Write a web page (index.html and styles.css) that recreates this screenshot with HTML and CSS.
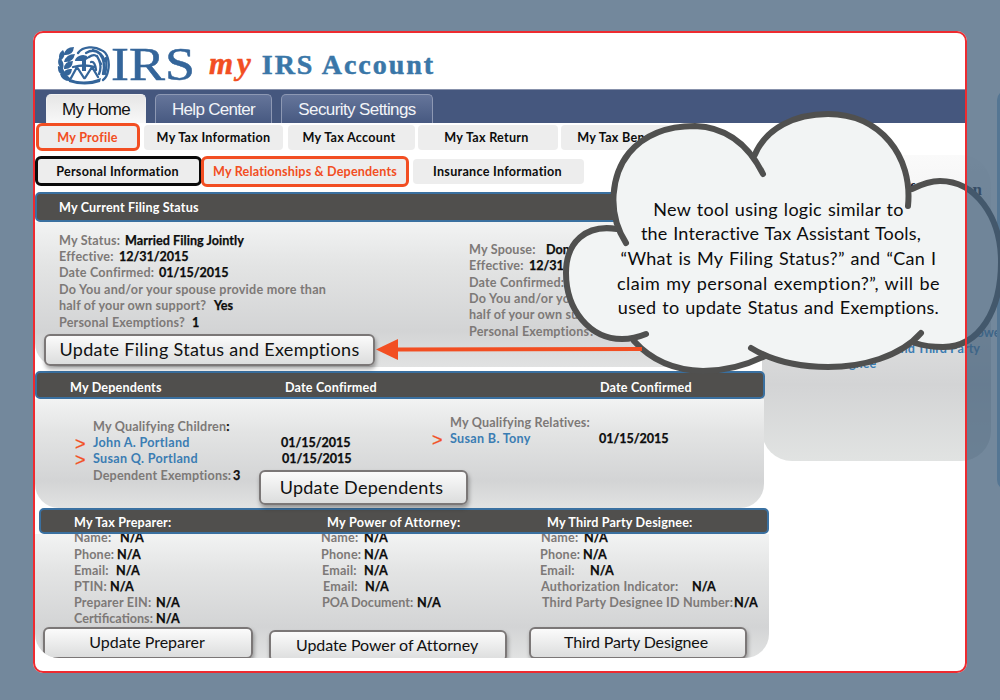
FILE: index.html
```html
<!DOCTYPE html>
<html lang="en">
<head>
<meta charset="utf-8">
<title>my IRS Account</title>
<link rel="stylesheet" href="styles.css">
</head>
<body>
<aside class="side">
  <h2 class="side-title">Tax Information</h2>
  <p class="side-link one">Power</p>
  <p class="side-link two">Attorney and Third Party</p>
  <p class="side-link three">Designee</p>
</aside>
<div class="edge"></div>
<main class="page">
  <header class="brand">
    <svg class="logo" viewBox="0 0 138 40" width="138" height="40">
      <g fill="#34659a">
        <path d="M17 1q-9 0-10 8q9 1 10-8zM6 4q-6 4-3 11q7-5 3-11zM18 8q-9 0-11 8q9 1 11-8zM2 12q-3 7 4 11q2-8-4-11zM16 15q-9 0-9 8q8 1 9-8zM1 20q-1 8 7 10q0-9-7-10zM15 23q-8-1-9 6q8 3 9-6zM3 28q2 8 12 7q-4-8-12-7z"/>
        <path d="M22 10q6-3 10 2l-3 2v11h-4V15h-7q0-3 4-5z"/>
        <path d="M11 32q15 7 33 0l-1 4q-15 5-31 0z"/>
      </g>
      <g fill="none" stroke="#34659a" stroke-width="2.300" stroke-linecap="round">
        <path d="M16 21q11-3 22 0M20 21l-6 11M20 21l7 11M35 21l-7 11M35 21l6 10"/>
        <path d="M21 7C26 0 38 0 44 4C51 6 53 17 51 25Q50 31 46 34"/>
        <path d="M29 7Q37 2 43 8Q49 16 46 28M32 11Q39 6 42 14Q45 21 42 28M34 16q4-1 5 8M36 4q9 2 12 11M49 12q1 9-1 16M40 10l4 8"/>
      </g>
      <text x="54" y="34" class="logo-text" textLength="84" lengthAdjust="spacingAndGlyphs">IRS</text>
    </svg>
    <h1 class="title"><em>my</em> IRS Account</h1>
  </header>
  <nav class="tabs">
    <a class="tab on">My Home</a><a class="tab help">Help Center</a><a class="tab sec">Security Settings</a>
  </nav>
  <nav class="row r1">
    <a class="chip orange c1">My Profile</a><a class="chip c2">My Tax Information</a><a class="chip c3">My Tax Account</a><a class="chip c4">My Tax Return</a><a class="chip c5">My Tax Benefits</a>
  </nav>
  <nav class="row r2">
    <a class="chip black d1">Personal Information</a><a class="chip orange d2">My Relationships &amp; Dependents</a><a class="chip d3">Insurance Information</a>
  </nav>

  <section class="sect s1">
    <div class="bar"><span>My Current Filing Status</span></div>
    <div class="panel">
      <div class="col f1">
        <p><span class="k w66">My Status:</span><b>Married Filing Jointly</b></p>
        <p><span class="k w60">Effective:</span><b class="date">12/31/2015</b></p>
        <p><span class="k w100">Date Confirmed:</span><b class="date">01/15/2015</b></p>
        <p class="gap"><span class="k wide">Do You and/or your spouse provide more than</span></p>
        <p><span class="k w155">half of your own support?</span><b>Yes</b></p>
        <p class="gap"><span class="k w133">Personal Exemptions?</span><b>1</b></p>
      </div>
      <div class="col f2">
        <p><span class="k w77">My Spouse:</span><b>Donna Portland</b></p>
        <p><span class="k w60">Effective:</span><b class="date">12/31/2015</b></p>
        <p class="gap"><span class="k w100">Date Confirmed:</span></p>
        <p><span class="k wide">Do You and/or your spouse</span></p>
        <p><span class="k w155">half of your own support?</span></p>
        <p class="gap"><span class="k w133">Personal Exemptions?</span></p>
      </div>
      <button class="btn b1">Update Filing Status and Exemptions</button>
    </div>
  </section>

  <section class="sect s2">
    <div class="bar"><span>My Dependents</span><span>Date Confirmed</span><span>Date Confirmed</span></div>
    <div class="panel">
      <div class="col g1">
        <p><span class="k">My Qualifying Children</span><b>:</b></p>
        <p class="link"><i>&gt;</i>John A. Portland</p>
        <p class="link"><i>&gt;</i>Susan Q. Portland</p>
        <p><span class="k w140">Dependent Exemptions:</span><b>3</b></p>
      </div>
      <div class="col g2"><p><b class="date">01/15/2015</b></p><p class="in1"><b class="date">01/15/2015</b></p></div>
      <div class="col g3">
        <p><span class="k">My Qualifying Relatives:</span></p>
        <p class="link"><i>&gt;</i>Susan B. Tony</p>
      </div>
      <div class="col g4"><p><b class="date">01/15/2015</b></p></div>
      <button class="btn b2">Update Dependents</button>
    </div>
  </section>

  <section class="sect s3">
    <div class="bar"><span>My Tax Preparer:</span><span class="poa">My Power of Attorney:</span><span>My Third Party Designee:</span></div>
    <div class="panel">
      <div class="col h1">
        <p><span class="k w46">Name:</span><b>N/A</b></p>
        <p class="gap"><span class="k w43">Phone:</span><b>N/A</b></p>
        <p><span class="k w42">Email:</span><b>N/A</b></p>
        <p><span class="k w36">PTIN:</span><b>N/A</b></p>
        <p><span class="k w82">Preparer EIN:</span><b>N/A</b></p>
        <p><span class="k w82 tight">Certifications:</span><b>N/A</b></p>
      </div>
      <div class="col h2">
        <p><span class="k w43">Name:</span><b>N/A</b></p>
        <p class="gap"><span class="k w43">Phone:</span><b>N/A</b></p>
        <p class="in1"><span class="k w42">Email:</span><b>N/A</b></p>
        <p class="in2"><span class="k w42">Email:</span><b>N/A</b></p>
        <p class="in1"><span class="k w95 tight">POA Document:</span><b>N/A</b></p>
      </div>
      <div class="col h3">
        <p class="in1"><span class="k w43">Name:</span><b>N/A</b></p>
        <p class="gap"><span class="k w43">Phone:</span><b>N/A</b></p>
        <p><span class="k w50">Email:</span><b>N/A</b></p>
        <p class="in1"><span class="k w151">Authorization Indicator:</span><b>N/A</b></p>
        <p class="in2"><span class="k w192">Third Party Designee ID Number:</span><b>N/A</b></p>
      </div>
      <button class="btn b3">Update Preparer</button>
      <button class="btn b4">Update Power of Attorney</button>
      <button class="btn b5">Third Party Designee</button>
    </div>
  </section>
</main>

<svg class="callout" viewBox="0 0 1000 700" width="1000" height="700">
  <path fill="#f2f4f4" d="M618 229C606 190 626 126 695 126C725 127 741 140 754.700 155C766 128 795 114 828 114C875 114 908 147 910 190C922 184 932 181 940 181C975 181 1001 216 1001 262C1001 310 980 347 943 347Q927 347 915 343C888 360 858 367 828 367Q794 367 765 356C745 366 725 371 703 371Q660 370 633 340C590 341 566 310 566 273C566 242 586 224 618 229Z"/>
  <g fill="none" stroke="#50504f" stroke-width="6" stroke-linecap="round">
    <path d="M626 243C606 212 612 174 629 153C645 134 668 126 695 126C725 127 748 144 763 174"/>
    <path d="M754.700 155C766 128 795 114 828 114C880 114 913 156 908 206"/>
    <path d="M912 189C922 184 932 181 940 181C975 181 1001 216 1001 262C1001 310 980 347 943 347Q927 347 915 343"/>
    <path d="M921 333C900 357 862 367 828 367Q782 367 751 348"/>
    <path d="M765 356C745 366 725 371 703 371Q660 370 634 341"/>
    <path d="M646 334Q634 339 622 339C590 339 566 310 566 273C566 242 586 224 617 229"/>
  </g>
  <path d="M397 349.500L642 349" stroke="#f24e22" stroke-width="4"/>
  <path d="M376 349.500l22-10.500v21z" fill="#f24e22"/>
</svg>
<div class="bubble">
  <p class="l1">New tool using logic similar to</p>
  <p class="l2">the Interactive Tax Assistant Tools,</p>
  <p class="l3">“What is My Filing Status?” and “Can I</p>
  <p class="l4">claim my personal exemption?”, will be</p>
  <p class="l5">used to update Status and Exemptions.</p>
</div>
<div class="frame"></div>
</body>
</html>
```
FILE: styles.css
```css
* { box-sizing: border-box; }
body { margin: 0; width: 1000px; height: 700px; overflow: hidden; position: relative; background: #fff; font-family: Lato, "Liberation Sans", sans-serif; font-size: 12.6px; color: #0c0c0c; }
p, h1, h2 { margin: 0; white-space: nowrap; }
b { font-weight: 700; letter-spacing: .05px; -webkit-text-stroke: .25px; }
.frame { position: absolute; left: 33px; top: 31px; width: 934px; height: 642px; border: 2px solid #ee2b30; border-radius: 10px; box-shadow: 0 0 0 60px rgba(63,92,119,.73); }
.page { position: absolute; left: 35px; top: 33px; width: 930px; height: 638px; }

.brand { height: 56px; display: flex; padding: 13px 0 0 22px; }
.logo-text { font-family: "Liberation Serif", serif; font-size: 46px; fill: #34659a; stroke: #34659a; stroke-width: .5px; }
.title { font: bold 28px/37px "Liberation Serif", serif; color: #3a77a8; letter-spacing: 1.950px; margin-left: 14px; margin-top: -1px; -webkit-text-stroke: .5px; }
.title em { color: #f24e22; font-size: 31px; letter-spacing: 4px; margin-right: -2px; }
.tabs { height: 34px; background: #45577e; border-top: 1px solid #8791ab; display: flex; align-items: flex-end; padding-left: 11px; gap: 9px; }
.tab { height: 29px; width: 100px; border-radius: 5px 5px 0 0; font: 17px/29px "Liberation Sans", sans-serif; letter-spacing: -.7px; text-align: center; border: 1.500px solid #8d98b3; border-bottom: 0; background: linear-gradient(#65759a, #475981); color: #f2f4f8; }
.tab.on { background: linear-gradient(#e6e6e6, #f8f8f8); border-color: #f2f2f2; color: #111; }
.tab.help { width: 117px; }
.tab.sec { width: 152px; letter-spacing: -.6px; }

.row { display: flex; }
.r1 { height: 33px; padding-left: 1px; }
.r2 { height: 36px; }
.chip { background: #ededed; border-radius: 4px; font-weight: 700; text-align: center; height: 25px; line-height: 25px; margin-top: 2px; white-space: nowrap; letter-spacing: .27px; }
.chip.orange { border: 3px solid #f24e22; color: #f24e22; border-radius: 6px; }
.chip.black { border: 3px solid #0a0a0a; border-radius: 6px; }
.chip.c1 { width: 104px; height: 28px; line-height: 23px; margin-top: 0; letter-spacing: .25px; padding-right: 1px; }
.c2 { width: 139px; margin-left: 4px; }
.c3 { width: 127px; margin-left: 5px; padding-right: 5px; }
.c4 { width: 140px; margin-left: 3px; padding-right: 3px; }
.c5 { width: 120px; margin-left: 3px; }
.chip.c5 { padding-left: 6px; }
.d1 { width: 167px; height: 30px; line-height: 25px; margin-top: 0; padding-right: 2px; }
.chip.d2 { width: 208px; height: 31px; line-height: 26px; margin-top: 0; margin-left: -1px; letter-spacing: .16px; }
.d3 { width: 171px; margin-left: 4px; margin-top: 3px; padding-right: 2px; }

.sect { width: 730px; }
.bar { background: #504f4d; border: 2px solid #3a70a0; border-radius: 5px; color: #fff; font-weight: 700; display: grid; letter-spacing: .17px; }
.poa { letter-spacing: .3px; }
.panel { background: linear-gradient(#f2f3f3, #e3e4e4 30%, #d3d4d5 75%, #e1e2e2); border-radius: 0 0 24px 24px; display: grid; width: 729px; }
.s1 .bar { height: 30px; line-height: 28px; padding-left: 22px; }
.s1 .panel { height: 145px; grid-template: 112px 33px / 433px 1fr; }
.s2 { margin-top: 4px; }
.s2 .bar { height: 28px; line-height: 29px; grid-template-columns: 215px 315px 1fr; padding-left: 33px; }
.s2 .panel { height: 109px; grid-template: 71px 38px / 246px 168px 150px 1fr; }
.s3 { width: 734px; }
.s3 .bar { margin-left: 4px; width: 730px; height: 26px; line-height: 25px; grid-template-columns: 253px 220px 1fr; padding-left: 33px; }
.s3 .panel { width: 734px; height: 124px; overflow: hidden; grid-template: 93px 31px / 286px 219px 1fr; border-radius: 0 0 24px 24px; }
.col { line-height: 16.200px; }
.col p { height: 16.200px; display: flex; }
.gap { margin-top: .5px; }
.k { color: #7d7977; font-weight: 700; letter-spacing: .17px; white-space: nowrap; display: block; }
.k.wide { letter-spacing: .23px; }
.k.tight { letter-spacing: 0; }
.date { letter-spacing: -.08px; }
.w36{width:36px}.w42{width:42px}.w43{width:43px}.w46{width:46px}.w50{width:50px}.w60{width:60px}.w66{width:66px}.w77{width:77px}.w82{width:82px}.w95{width:95px}.w100{width:100px}.w133{width:133px}.w140{width:140px}.w151{width:151px}.w155{width:155px}.w192{width:192px}
.f1 { padding: 11px 0 0 24px; }
.f2 { padding: 20px 0 0 1px; }
.g1 { padding: 20px 0 0 58px; }
.g2 { padding-top: 36px; }
.g3 { padding: 16px 0 0 1px; }
.g4 { padding: 32px 0 0; }
.link { color: #3b7db3; font-weight: 700; letter-spacing: .3px; }
.link i { width: 18px; margin-left: -18px; color: #f24e22; font: 18px/18px "Liberation Sans", sans-serif; -webkit-text-stroke: .3px; }
.h1 { padding: 0 0 0 39px; margin-top: -4px; }
.h2 { margin-top: -4px; }
.h3 { margin-top: -4px; }
.in1 { padding-left: 1px; }
.in2 { padding-left: 2px; }
.btn { font-family: inherit; color: #111; background: linear-gradient(#fbfbfb, #dcdddd); border: 2px solid #7b7777; border-radius: 6px; box-shadow: 1px 3px 4px rgba(0,0,0,.35); padding: 0 0 2px; white-space: nowrap; }
.b1 { width: 331px; height: 32px; margin-left: 9px; font-size: 18px; letter-spacing: .32px; }
.b2 { grid-area: 2 / 1 / 3 / 4; width: 209px; height: 35px; margin-left: 224px; font-size: 18px; letter-spacing: .28px; padding: 0 4px 1px 0; }
.b3, .b4, .b5 { font-size: 16px; height: 32px; padding-bottom: 4px; }
.b3 { width: 210px; margin-left: 8px; padding-right: 2px; }
.b4 { width: 238px; margin: 3px 0 0 -52px; letter-spacing: -.08px; padding-right: 2px; }
.b5 { width: 218px; margin-left: -11px; letter-spacing: -.15px; padding-right: 4px; }

.side { position: absolute; left: 762px; top: 155px; width: 229px; height: 306px; border-radius: 30px; background: linear-gradient(#fafafa, #ededed 35%, #d3d4d5 75%, #e1e3e2); }
.side-title { position: absolute; right: 9px; top: 25px; font: bold 17px "Liberation Serif", serif; color: #1a2838; }
.side-link { position: absolute; color: #3b7db3; font-weight: 700; }
.one { left: 207px; top: 170px; }
.two { right: 11px; top: 186px; }
.three { left: 62px; top: 201px; }
.edge { position: absolute; left: 997px; top: 90px; width: 20px; height: 400px; border-radius: 10px 0 0 10px; background: #90bcdd; }
.callout { position: absolute; left: 0; top: 0; }
.bubble { position: absolute; left: 600px; top: 196.500px; width: 357px; font-size: 18px; line-height: 24.700px; text-align: center; word-spacing: 1px; }
.l1 { letter-spacing: .3px; }
.l2 { letter-spacing: .17px; padding-left: 5px; }
.l3 { letter-spacing: .3px; }
.l4 { letter-spacing: .46px; }
.l5 { letter-spacing: .27px; }
```
